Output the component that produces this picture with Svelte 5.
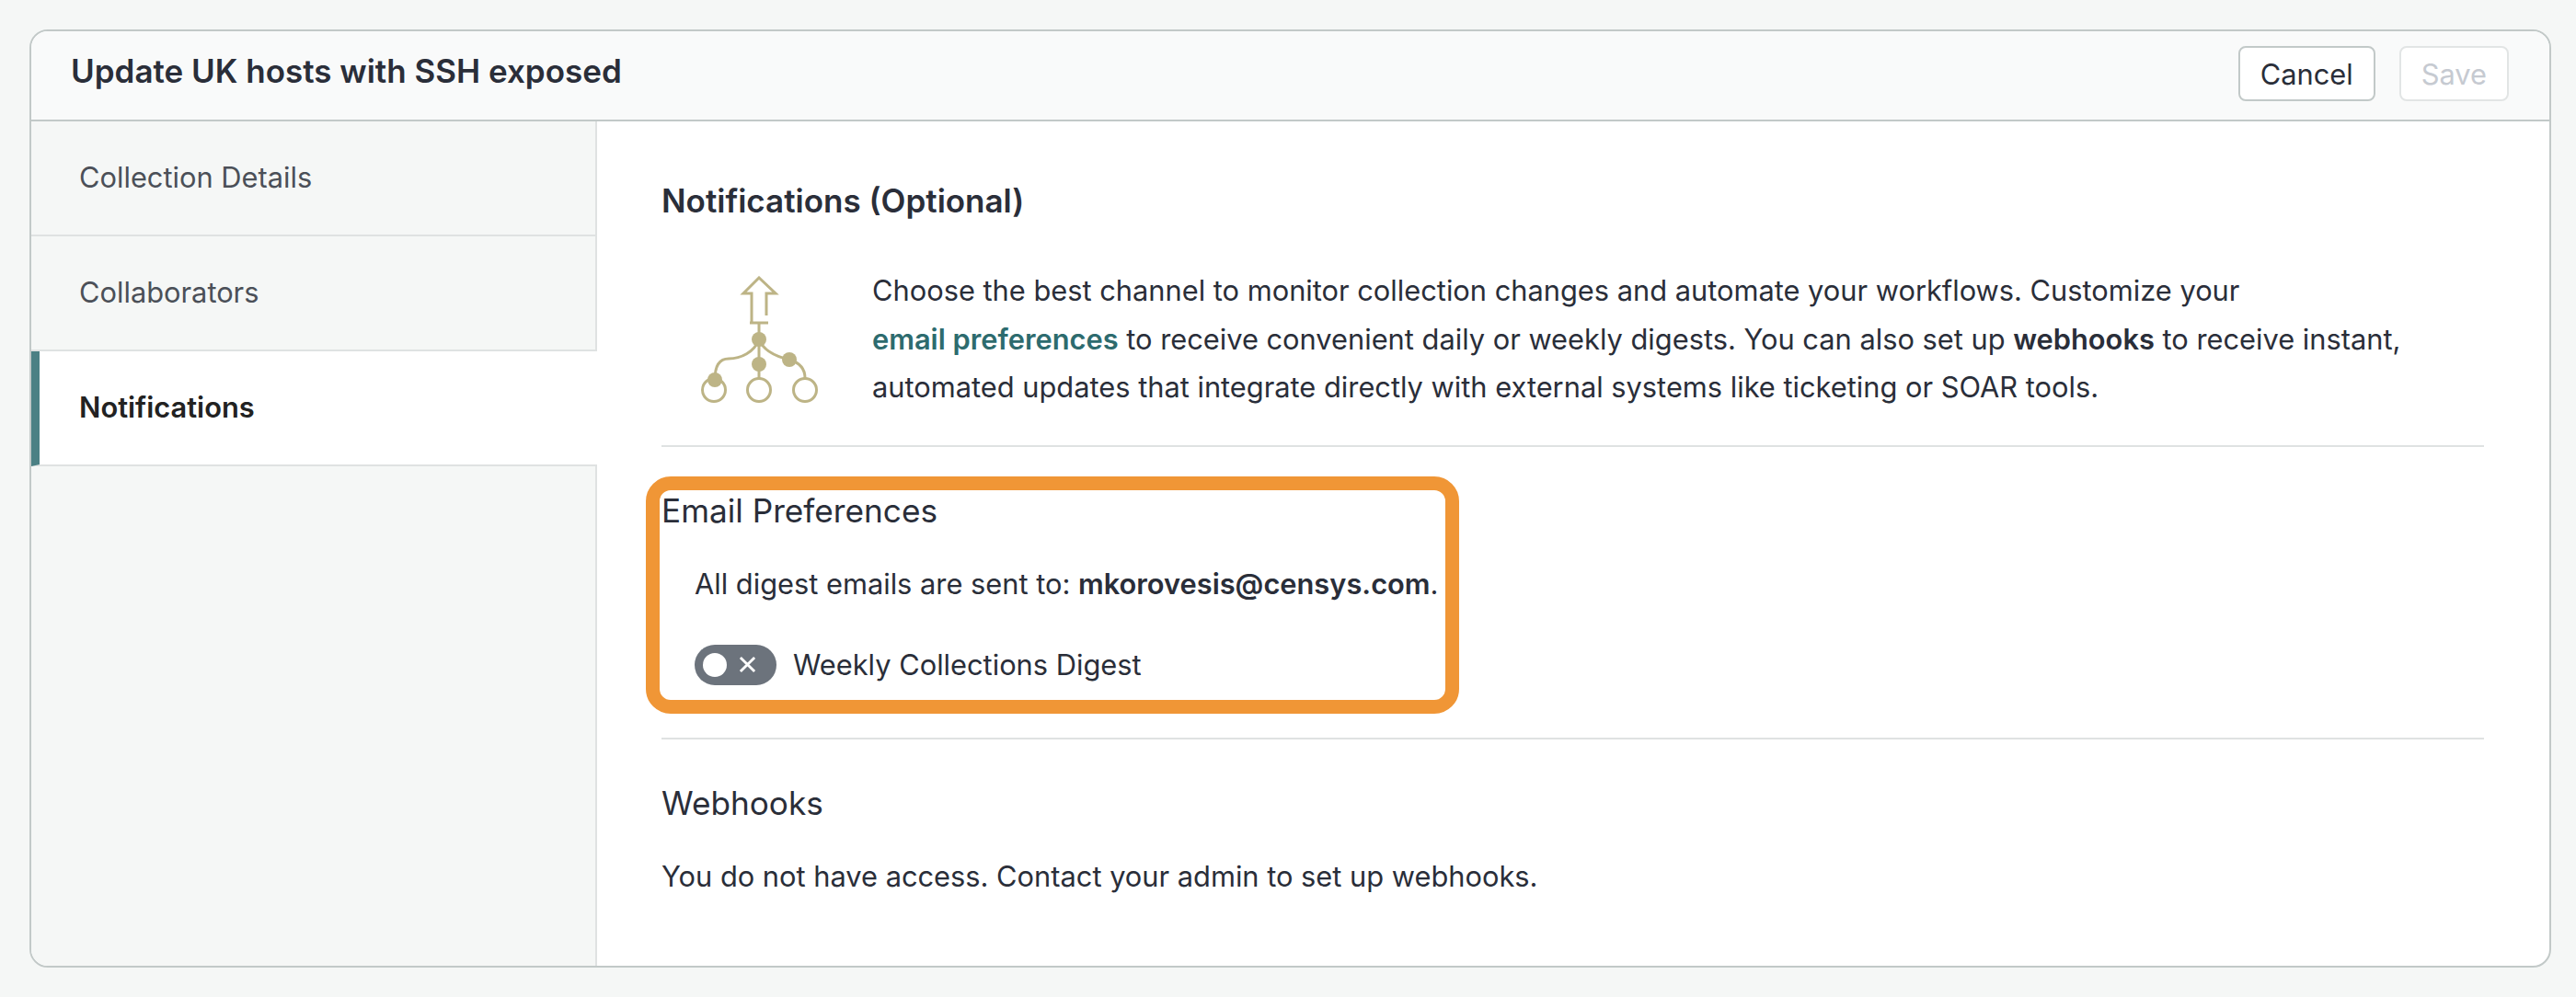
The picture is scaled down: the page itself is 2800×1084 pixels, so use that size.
<script>
	let weekly = $state(false);
	const tabs = ['Collection Details', 'Collaborators', 'Notifications'];
	let active = $state('Notifications');
</script>

<div class="page">
	<div class="card">
		<header class="top">
			<h1>Update UK hosts with SSH exposed</h1>
			<div class="actions">
				<button class="btn cancel">Cancel</button>
				<button class="btn save" disabled>Save</button>
			</div>
		</header>

		<div class="body">
			<nav class="side">
				{#each tabs as tab}
					<button class="tab" class:active={active === tab} onclick={() => (active = tab)}>{tab}</button>
				{/each}
			</nav>

			<main class="content">
				<h2>Notifications (Optional)</h2>

				<div class="intro">
					<svg class="intro-icon" viewBox="60 30 132 140" fill="none" stroke="#bdb486" stroke-width="3">
						<path d="M117 81V49H108L125 32L143 49H133V73" stroke-linejoin="miter" />
						<path d="M115 81H135M125 81V141" />
						<circle cx="76" cy="154" r="12.5" />
						<circle cx="125" cy="154" r="12.5" />
						<circle cx="175" cy="154" r="12.5" />
						<path d="M125 99C120 113 105 120 92 120C82 120 77 128 77 143" />
						<path d="M125 99C130 112 145 118 158 121C168 124 175 130 175 141" />
						<g fill="#bdb486" stroke="none">
							<circle cx="125" cy="99" r="8" />
							<circle cx="125" cy="126" r="8" />
							<circle cx="77" cy="143" r="8" />
							<circle cx="158" cy="121" r="8" />
						</g>
					</svg>
					<p>
						Choose the best channel to monitor collection changes and automate your workflows. Customize your
						<a href="#top">email preferences</a> to receive convenient daily or weekly digests. You can also set up
						<b>webhooks</b> to receive instant, automated updates that integrate directly with external systems like
						ticketing or SOAR tools.
					</p>
				</div>

				<section class="email">
					<h3>Email Preferences</h3>
					<p class="sent">All digest emails are sent to: <b>mkorovesis@censys.com</b>.</p>
					<div class="toggle-row">
						<button class="toggle" aria-label="Weekly Collections Digest" onclick={() => (weekly = !weekly)}>
							<span class="knob"></span>
							<svg viewBox="0 0 20 20" stroke="#fff" stroke-width="3"><path d="M2 2L18 18M18 2L2 18" /></svg>
						</button>
						<span>Weekly Collections Digest</span>
					</div>
					<!-- annotation du screenshot -->
					<div class="highlight"></div>
				</section>

				<section class="hooks">
					<h3>Webhooks</h3>
					<p>You do not have access. Contact your admin to set up webhooks.</p>
				</section>
			</main>
		</div>
	</div>
</div>

<style>
	:global(body) {
		background: #f5f7f6;
	}

	.page {
		padding: 32px 27px 32px 32px;
		font-family: Inter, 'Liberation Sans', sans-serif;
		color: #2a2e39;
		font-size: 30.8px;
	}

	.card {
		height: 1020px;
		box-sizing: border-box;
		display: flex;
		flex-direction: column;
		border: 2px solid #c2c9c8;
		border-radius: 20px;
		background: #fff;
		overflow: hidden;
	}

	.top {
		height: 98px;
		flex: none;
		box-sizing: border-box;
		display: flex;
		align-items: center;
		justify-content: space-between;
		padding: 0 44px 4px 43px;
		background: #f9fafa;
		border-bottom: 2px solid #c2c9c8;
	}

	h1 {
		margin: 0 0 6px;
		font-size: 35px;
		font-weight: 600;
	}

	.actions {
		display: flex;
		gap: 26px;
	}

	.btn {
		height: 60px;
		padding: 0 22px;
		font: inherit;
		background: #fff;
		border-radius: 8px;
		border: 2px solid #c2c9c8;
		color: #2a2e39;
	}

	.save {
		border-color: #e2e5e5;
		color: #c6cad1;
	}

	.body {
		flex: 1;
		display: flex;
		min-height: 0;
	}

	.side {
		width: 613px;
		flex: none;
		background: #f5f7f6;
		border-right: 2px solid #dfe2e2;
		display: flex;
		flex-direction: column;
	}

	.tab {
		height: 125px;
		flex: none;
		box-sizing: border-box;
		padding: 0 0 2px 52px;
		text-align: left;
		font: inherit;
		color: #4b5058;
		background: none;
		border: 0;
		border-bottom: 2px solid #dfe2e2;
	}

	.tab.active {
		margin-right: -2px;
		padding-left: 43px;
		background: #fff;
		color: #222;
		font-weight: 600;
		border-left: 9px solid #4b8084;
	}

	.content {
		flex: 1;
		padding: 64px 71px 0 70px;
	}

	h2 {
		margin: 0;
		font-size: 35px;
		line-height: 44px;
		font-weight: 600;
	}

	.intro {
		display: flex;
		align-items: flex-start;
		gap: 56px;
		padding: 50px 0 36px 41px;
		border-bottom: 2px solid #dfe2e2;
	}

	.intro-icon {
		width: 132px;
		height: 140px;
		flex: none;
		margin-top: 10px;
	}

	.intro p {
		margin: 0;
		line-height: 52.5px;
	}

	a {
		color: #2d6b6e;
		font-weight: 600;
		text-decoration: none;
		white-space: nowrap;
	}

	b {
		font-weight: 600;
	}

	.email {
		position: relative;
		padding: 47px 0 57px;
		border-bottom: 2px solid #dfe2e2;
	}

	h3 {
		margin: 0;
		font-size: 35.2px;
		line-height: 44px;
		font-weight: 400;
	}

	.sent {
		margin: 36px 0 0 36px;
		line-height: 44px;
	}

	.toggle-row {
		display: flex;
		align-items: center;
		gap: 18px;
		margin: 44px 0 0 36px;
	}

	.toggle {
		width: 89px;
		height: 44px;
		border: 0;
		padding: 0 22px 0 9px;
		border-radius: 22px;
		background: #6c737c;
		display: flex;
		align-items: center;
		justify-content: space-between;
	}

	.knob {
		width: 26px;
		height: 26px;
		border-radius: 50%;
		background: #fff;
	}

	.toggle svg {
		width: 19px;
		height: 19px;
	}

	.highlight {
		position: absolute;
		left: -17px;
		top: 32px;
		width: 884px;
		height: 258px;
		box-sizing: border-box;
		border: 15px solid #f09636;
		border-radius: 27px;
		pointer-events: none;
	}

	.hooks {
		padding-top: 47px;
	}

	.hooks p {
		margin: 36px 0 0;
		line-height: 44px;
	}
</style>
